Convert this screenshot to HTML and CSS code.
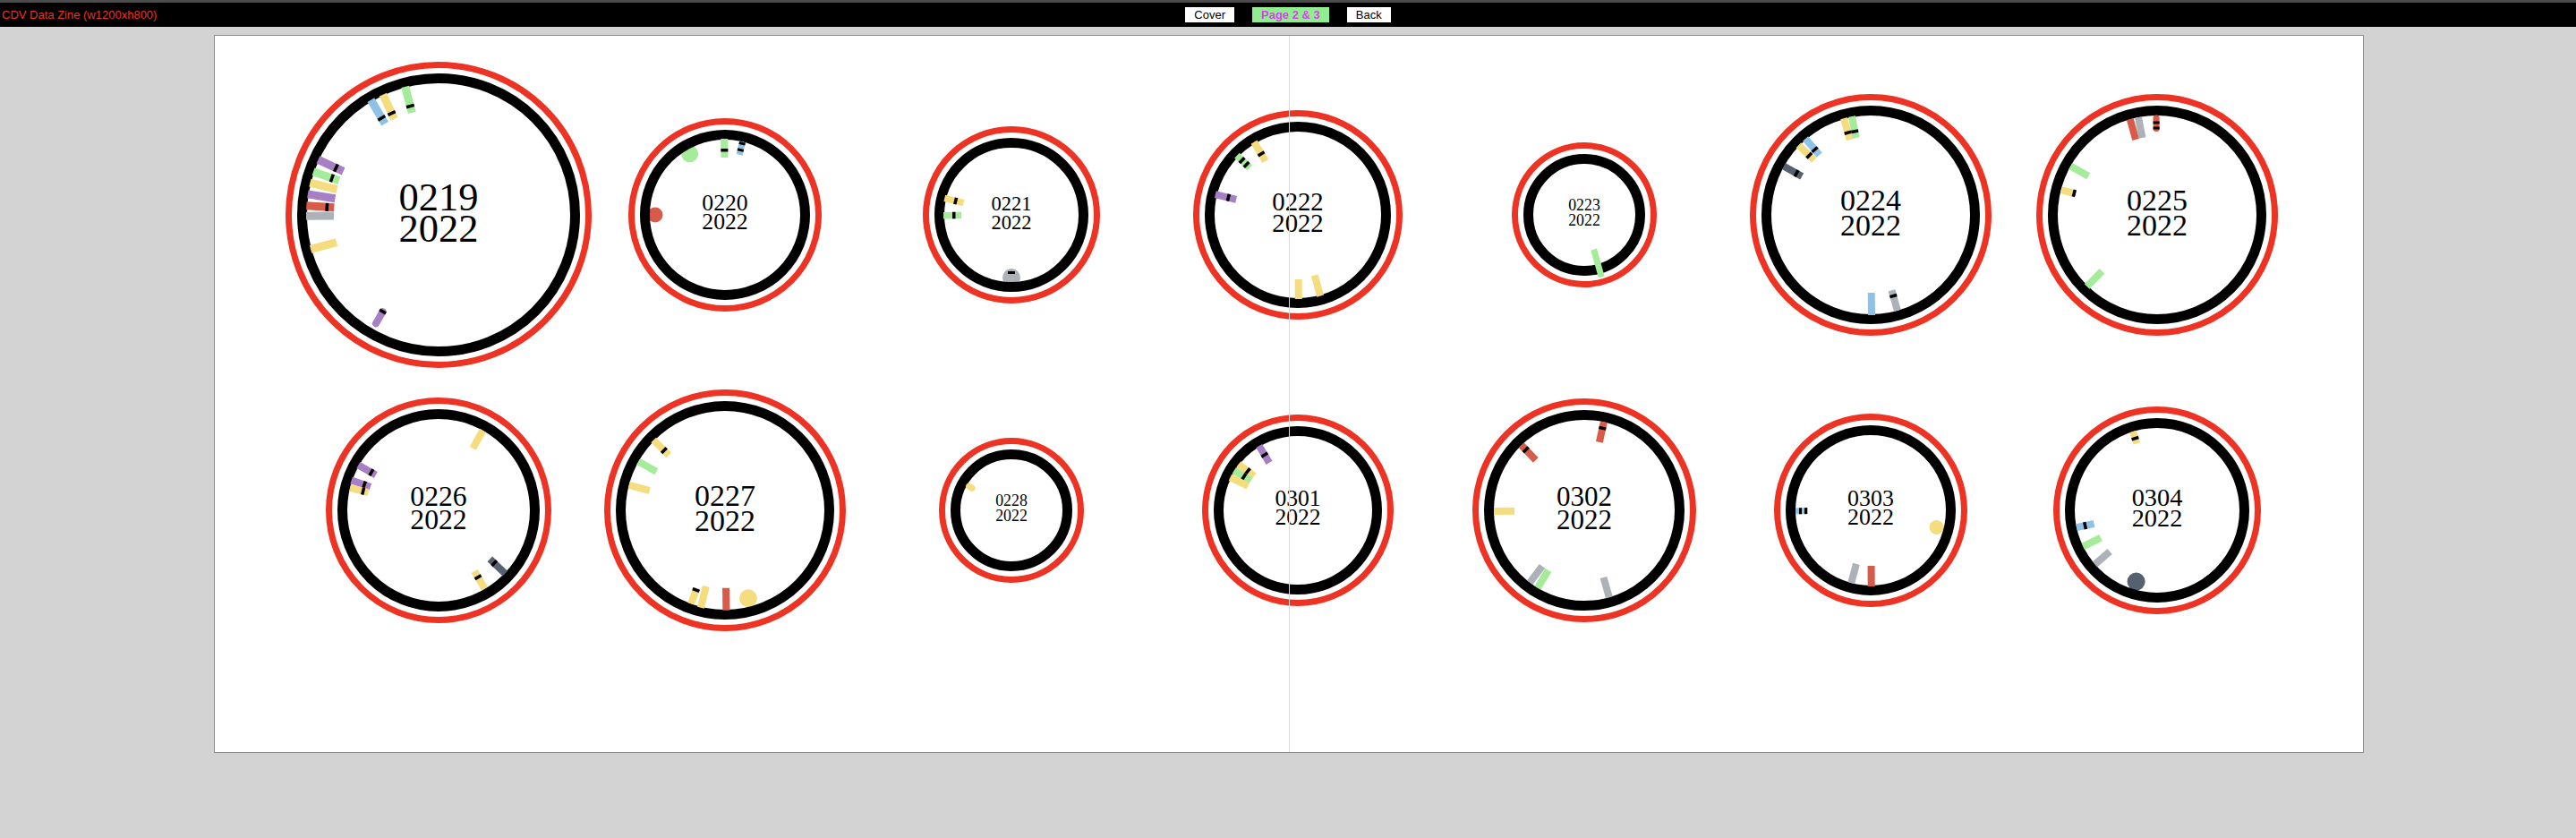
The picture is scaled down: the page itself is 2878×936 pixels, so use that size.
FILE: index.html
```html
<!DOCTYPE html>
<html lang="en">
<head>
<meta charset="utf-8">
<title>CDV Data Zine</title>
<link rel="stylesheet" href="styles.css">
</head>
<body>
<header class="topbar">
  <div class="title">CDV Data Zine (w1200xh800)</div>
  <nav class="nav">
    <button class="btn">Cover</button>
    <button class="btn btn-active">Page 2 &amp; 3</button>
    <button class="btn">Back</button>
  </nav>
  <div class="spacer"></div>
</header>
<main class="page">
  <div class="grid">
    <!-- 0219 -->
    <div class="cell">
      <svg class="viz" viewBox="-172 -172 344 344" width="344" height="344">
        <circle class="ring-red" r="167.5"/>
        <circle class="ring-black" r="152.5"/>
        <g transform="rotate(-30.5)"><rect class="bl" x="-4.5" y="-149" width="9" height="31"/><rect class="tk" x="-4.5" y="-127.25" width="9" height="3.5"/></g>
        <g transform="rotate(-24.8)"><rect class="ye" x="-4.5" y="-148" width="9" height="30"/><rect class="tk" x="-4.5" y="-126.75" width="9" height="3.5"/></g>
        <g transform="rotate(-14.6)"><rect class="gr" x="-4.5" y="-148" width="9" height="30"/><rect class="tk" x="-4.5" y="-127.25" width="9" height="3.5"/></g>
        <g transform="rotate(-65.4)"><rect class="pu" x="-4.5" y="-148" width="9" height="31"/><rect class="tk" x="-4.5" y="-127.75" width="9" height="3.5"/></g>
        <g transform="rotate(-71)"><rect class="gr" x="-4.5" y="-148" width="9" height="30.5"/><rect class="tk" x="-4.5" y="-127.75" width="9" height="3.5"/></g>
        <g transform="rotate(-76)"><rect class="ye" x="-4.5" y="-148" width="9" height="31"/></g>
        <g transform="rotate(-81)"><rect class="pu" x="-4.5" y="-148" width="9" height="31"/></g>
        <g transform="rotate(-86)"><rect class="re" x="-4.5" y="-148" width="9" height="31"/><rect class="tk" x="-4.5" y="-126.75" width="9" height="3.5"/></g>
        <g transform="rotate(-90.5)"><rect class="gy" x="-4.5" y="-148" width="9" height="31"/></g>
        <g transform="rotate(-105)"><rect class="ye" x="-4.5" y="-148" width="9" height="30"/></g>
        <g transform="rotate(-150)"><rect class="pu" x="-4" y="-144" width="8" height="23" rx="4"/><rect class="tk" x="-4" y="-126.5" width="8" height="3.5"/></g>
        <text class="lbl" font-size="44.5"><tspan x="0" y="-5">0219</tspan><tspan x="0" y="30">2022</tspan></text>
      </svg>
    </div>
    <!-- 0220 -->
    <div class="cell">
      <svg class="viz" viewBox="-172 -172 344 344" width="344" height="344">
        <circle class="ring-red" r="104.5"/>
        <circle class="gr" cx="-39.4" cy="-68.2" r="9.5"/>
        <circle class="re" cx="-78" cy="0" r="8.5"/>
        <circle class="ring-black" r="89.5"/>
        <g transform="rotate(-0.5)"><rect class="gr" x="-4" y="-85" width="8" height="21"/><rect class="tk" x="-4" y="-74" width="8" height="3.5"/></g>
        <g transform="rotate(13.5)"><rect class="bl" x="-3.5" y="-84" width="7" height="15"/><rect class="tk" x="-3.5" y="-83.5" width="7" height="3"/><rect class="tk" x="-3.5" y="-76" width="7" height="3"/></g>
        <text class="lbl" font-size="25.7"><tspan x="0" y="-5">0220</tspan><tspan x="0" y="16">2022</tspan></text>
      </svg>
    </div>
    <!-- 0221 -->
    <div class="cell">
      <svg class="viz" viewBox="-172 -172 344 344" width="344" height="344">
        <circle class="ring-red" r="95.5"/>
        <circle class="gy" cx="0" cy="70" r="10"/>
        <circle class="ring-black" r="80.5"/>
        <g transform="rotate(-76)"><rect class="ye" x="-3.75" y="-77" width="7.5" height="22"/><rect class="tk" x="-3.75" y="-66" width="7.5" height="3.5"/></g>
        <g transform="rotate(-90.5)"><rect class="gr" x="-3.75" y="-76" width="7.5" height="20"/><rect class="tk" x="-3.75" y="-66" width="7.5" height="3.5"/></g>
        <g transform="rotate(180)"><rect class="tk" x="-4" y="-66" width="8" height="3"/></g>
        <text class="lbl" font-size="22.5"><tspan x="0" y="-5">0221</tspan><tspan x="0" y="15.7">2022</tspan></text>
      </svg>
    </div>
    <!-- 0222 -->
    <div class="cell">
      <svg class="viz" viewBox="-172 -172 344 344" width="344" height="344">
        <circle class="ring-red" r="113.5"/>
        <circle class="ring-black" r="98.5"/>
        <g transform="rotate(-31)"><rect class="ye" x="-4" y="-95" width="8" height="25"/><rect class="tk" x="-4" y="-81.25" width="8" height="3.5"/></g>
        <g transform="rotate(-45.7)"><rect class="gr" x="-4" y="-95" width="8" height="20"/><rect class="tk" x="-4" y="-89" width="8" height="3.5"/><rect class="tk" x="-4" y="-82" width="8" height="3.5"/></g>
        <g transform="rotate(-76)"><rect class="pu" x="-4" y="-95" width="8" height="24"/><rect class="tk" x="-4" y="-81.75" width="8" height="3.5"/></g>
        <g transform="rotate(179.5)"><rect class="ye" x="-4" y="-94" width="8" height="22"/></g>
        <g transform="rotate(164.5)"><rect class="ye" x="-4" y="-94" width="8" height="24"/></g>
        <text class="lbl" font-size="28.7"><tspan x="0" y="-5">0222</tspan><tspan x="0" y="19.3">2022</tspan></text>
      </svg>
    </div>
    <!-- 0223 -->
    <div class="cell">
      <svg class="viz" viewBox="-172 -172 344 344" width="344" height="344">
        <circle class="ring-red" r="77.5"/>
        <circle class="ring-black" r="62.5"/>
        <g transform="rotate(164.5)"><rect class="gr" x="-3.5" y="-72" width="7" height="32"/></g>
        <text class="lbl" font-size="17.8"><tspan x="0" y="-5">0223</tspan><tspan x="0" y="12">2022</tspan></text>
      </svg>
    </div>
    <!-- 0224 -->
    <div class="cell">
      <svg class="viz" viewBox="-172 -172 344 344" width="344" height="344">
        <circle class="ring-red" r="131.5"/>
        <circle class="ring-black" r="116.5"/>
        <g transform="rotate(-15.5)"><rect class="ye" x="-4" y="-112" width="8" height="25"/><rect class="tk" x="-4" y="-97" width="8" height="3.5"/></g>
        <g transform="rotate(-10.8)"><rect class="gr" x="-4" y="-112" width="8" height="24.5"/><rect class="tk" x="-4" y="-96.75" width="8" height="3.5"/></g>
        <g transform="rotate(-40.6)"><rect class="bl" x="-4" y="-112" width="8" height="24"/><rect class="tk" x="-4" y="-97.75" width="8" height="3.5"/></g>
        <g transform="rotate(-46)"><rect class="ye" x="-4" y="-112" width="8" height="24"/><rect class="tk" x="-4" y="-97.25" width="8" height="3.5"/></g>
        <g transform="rotate(-60.8)"><rect class="sl" x="-4" y="-111" width="8" height="23"/><rect class="tk" x="-4" y="-96.75" width="8" height="3.5"/></g>
        <g transform="rotate(179.5)"><rect class="bl" x="-4" y="-112" width="8" height="25"/></g>
        <g transform="rotate(164.4)"><rect class="gy" x="-4" y="-111" width="8" height="23.5"/><rect class="tk" x="-4" y="-95.75" width="8" height="3.5"/></g>
        <text class="lbl" font-size="34"><tspan x="0" y="-5">0224</tspan><tspan x="0" y="23">2022</tspan></text>
      </svg>
    </div>
    <!-- 0225 -->
    <div class="cell">
      <svg class="viz" viewBox="-172 -172 344 344" width="344" height="344">
        <circle class="ring-red" r="131.5"/>
        <circle class="ring-black" r="116.5"/>
        <g transform="rotate(-15.8)"><rect class="re" x="-4" y="-111" width="8" height="23.5"/></g>
        <g transform="rotate(-10.9)"><rect class="gy" x="-4" y="-111" width="8" height="23.5"/></g>
        <g transform="rotate(-0.5)"><rect class="re" x="-3.5" y="-111.5" width="7" height="18.5" rx="3"/><rect class="tk" x="-3.5" y="-104.5" width="7" height="3"/><rect class="tk" x="-3.5" y="-98.5" width="7" height="3"/></g>
        <g transform="rotate(-60.6)"><rect class="gr" x="-4" y="-111" width="8" height="23"/></g>
        <g transform="rotate(-75.4)"><rect class="ye" x="-4" y="-111" width="8" height="17" rx="3"/><rect class="tk" x="-4" y="-97.5" width="8" height="3.5"/></g>
        <g transform="rotate(-135.6)"><rect class="gr" x="-4" y="-112" width="8" height="24"/></g>
        <text class="lbl" font-size="34"><tspan x="0" y="-5">0225</tspan><tspan x="0" y="23">2022</tspan></text>
      </svg>
    </div>
    <!-- 0226 -->
    <div class="cell">
      <svg class="viz" viewBox="-172 -172 344 344" width="344" height="344">
        <circle class="ring-red" r="122.5"/>
        <circle class="ring-black" r="107.5"/>
        <g transform="rotate(29)"><rect class="ye" x="-4" y="-102" width="8" height="23"/></g>
        <g transform="rotate(-60.6)"><rect class="pu" x="-4" y="-103" width="8" height="22.5"/><rect class="tk" x="-4" y="-88" width="8" height="3.5"/></g>
        <g transform="rotate(-71)"><rect class="pu" x="-4" y="-103" width="8" height="22.5"/><rect class="tk" x="-4" y="-89.5" width="8" height="3.5"/></g>
        <g transform="rotate(-75.8)"><rect class="ye" x="-4" y="-102" width="8" height="21"/><rect class="tk" x="-4" y="-88.75" width="8" height="3.5"/></g>
        <g transform="rotate(133.5)"><rect class="sl" x="-4" y="-102.5" width="8" height="23.5"/><rect class="tk" x="-4" y="-87.5" width="8" height="3.5"/></g>
        <g transform="rotate(149.5)"><rect class="ye" x="-4" y="-101.5" width="8" height="22.5"/><rect class="tk" x="-4" y="-88.5" width="8" height="3.5"/></g>
        <text class="lbl" font-size="31.7"><tspan x="0" y="-5">0226</tspan><tspan x="0" y="20.7">2022</tspan></text>
      </svg>
    </div>
    <!-- 0227 -->
    <div class="cell">
      <svg class="viz" viewBox="-172 -172 344 344" width="344" height="344">
        <circle class="ring-red" r="131.5"/>
        <circle class="ye" cx="26" cy="98.3" r="10"/>
        <circle class="ring-black" r="116.5"/>
        <g transform="rotate(-45.5)"><rect class="ye" x="-4" y="-112" width="8" height="24"/><rect class="tk" x="-4" y="-97.25" width="8" height="3.5"/></g>
        <g transform="rotate(-60.6)"><rect class="gr" x="-4" y="-111" width="8" height="23"/></g>
        <g transform="rotate(-75.3)"><rect class="ye" x="-4" y="-111" width="8" height="24"/></g>
        <g transform="rotate(-160)"><rect class="ye" x="-4" y="-111" width="8" height="18.5"/><rect class="tk" x="-4" y="-96.5" width="8" height="3.5"/></g>
        <g transform="rotate(-166)"><rect class="ye" x="-4" y="-112" width="8" height="24.5"/></g>
        <g transform="rotate(179.3)"><rect class="re" x="-4" y="-111.7" width="8" height="25"/></g>
        <text class="lbl" font-size="34"><tspan x="0" y="-5">0227</tspan><tspan x="0" y="23">2022</tspan></text>
      </svg>
    </div>
    <!-- 0228 -->
    <div class="cell">
      <svg class="viz" viewBox="-172 -172 344 344" width="344" height="344">
        <circle class="ring-red" r="77.5"/>
        <circle class="ring-black" r="62.5"/>
        <g transform="rotate(-60.6)"><rect class="ye" x="-3.5" y="-58" width="7" height="11" rx="3.5"/></g>
        <text class="lbl" font-size="17.8"><tspan x="0" y="-5">0228</tspan><tspan x="0" y="12">2022</tspan></text>
      </svg>
    </div>
    <!-- 0301 -->
    <div class="cell">
      <svg class="viz" viewBox="-172 -172 344 344" width="344" height="344">
        <circle class="ring-red" r="103.5"/>
        <circle class="ring-black" r="88.5"/>
        <g transform="rotate(-31)"><rect class="pu" x="-4" y="-84" width="8" height="22"/><rect class="tk" x="-4" y="-74" width="8" height="3.5"/></g>
        <g transform="rotate(-52)"><rect class="ye" x="-4" y="-84" width="8" height="22"/><rect class="tk" x="-4" y="-72.75" width="8" height="3.5"/></g>
        <g transform="rotate(-58)"><rect class="gr" x="-4" y="-84" width="8" height="22"/><rect class="tk" x="-4" y="-72.75" width="8" height="3.5"/></g>
        <g transform="rotate(-64)"><rect class="ye" x="-4" y="-84" width="8" height="22"/></g>
        <text class="lbl" font-size="25.6"><tspan x="0" y="-5">0301</tspan><tspan x="0" y="16">2022</tspan></text>
      </svg>
    </div>
    <!-- 0302 -->
    <div class="cell">
      <svg class="viz" viewBox="-172 -172 344 344" width="344" height="344">
        <circle class="ring-red" r="121.5"/>
        <circle class="ring-black" r="106.5"/>
        <g transform="rotate(12.5)"><rect class="re" x="-4" y="-101" width="8" height="23"/><rect class="tk" x="-4" y="-95.75" width="8" height="3.5"/></g>
        <g transform="rotate(-44)"><rect class="re" x="-4" y="-101" width="8" height="23"/><rect class="tk" x="-4" y="-95.75" width="8" height="3.5"/></g>
        <g transform="rotate(-90.5)"><rect class="ye" x="-4" y="-101" width="8" height="23"/></g>
        <g transform="rotate(-143)"><rect class="gy" x="-4" y="-101" width="8" height="23"/></g>
        <g transform="rotate(-149)"><rect class="gr" x="-4" y="-101" width="8" height="23"/></g>
        <g transform="rotate(164)"><rect class="gy" x="-4" y="-101" width="8" height="23"/></g>
        <text class="lbl" font-size="31"><tspan x="0" y="-5">0302</tspan><tspan x="0" y="20.5">2022</tspan></text>
      </svg>
    </div>
    <!-- 0303 -->
    <div class="cell">
      <svg class="viz" viewBox="-172 -172 344 344" width="344" height="344">
        <circle class="ring-red" r="104.5"/>
        <circle class="ye" cx="73.6" cy="18.9" r="8"/>
        <circle class="ring-black" r="89.5"/>
        <g transform="rotate(-90.5)"><rect class="bl" x="-3.5" y="-84" width="7" height="14"/><rect class="tk" x="-3.5" y="-80" width="7" height="3"/><rect class="tk" x="-3.5" y="-74" width="7" height="3"/></g>
        <g transform="rotate(-165)"><rect class="gy" x="-4" y="-84" width="8" height="22"/></g>
        <g transform="rotate(179.5)"><rect class="re" x="-4" y="-85" width="8" height="23"/></g>
        <text class="lbl" font-size="25.9"><tspan x="0" y="-5">0303</tspan><tspan x="0" y="16">2022</tspan></text>
      </svg>
    </div>
    <!-- 0304 -->
    <div class="cell">
      <svg class="viz" viewBox="-172 -172 344 344" width="344" height="344">
        <circle class="ring-red" r="112.5"/>
        <circle class="sl" cx="-23.4" cy="79.6" r="10"/>
        <circle class="ring-black" r="97.5"/>
        <g transform="rotate(-17)"><rect class="ye" x="-4" y="-92" width="8" height="14"/><rect class="tk" x="-4" y="-85.75" width="8" height="3.5"/></g>
        <g transform="rotate(-102)"><rect class="bl" x="-4" y="-92" width="8" height="20"/><rect class="tk" x="-4" y="-84" width="8" height="3.5"/></g>
        <g transform="rotate(-116)"><rect class="gr" x="-4" y="-92" width="8" height="22"/></g>
        <g transform="rotate(-131)"><rect class="gy" x="-4" y="-92" width="8" height="22"/></g>
        <text class="lbl" font-size="28.3"><tspan x="0" y="-5">0304</tspan><tspan x="0" y="18">2022</tspan></text>
      </svg>
    </div>
  </div>
</main>
</body>
</html>
```
FILE: styles.css
```css
html, body {
  margin: 0;
  padding: 0;
}

body {
  background: #d3d3d3;
  min-height: 936px;
}

.topbar {
  display: grid;
  grid-template-columns: 1fr auto 1fr;
  align-items: center;
  height: 27px;
  border-top: 3px solid #4b4b4b;
  background: #000;
}

.title {
  color: #ec3324;
  font: 13px/27px "Liberation Sans", Arial, sans-serif;
  padding-left: 2px;
  white-space: nowrap;
}

.nav {
  display: flex;
  gap: 20px;
  align-items: center;
}

.btn {
  font: 13px/17px "Liberation Sans", Arial, sans-serif;
  height: 17px;
  padding: 0 10px;
  margin: 0;
  border: 0;
  border-radius: 0;
  background: #fff;
  color: #000;
}

.btn-active {
  background: #90ee90;
  color: #dd3fec;
  font-weight: bold;
}

.page {
  position: relative;
  width: 2400px;
  height: 800px;
  margin: 9px 0 0 239px;
  background: #fff;
  border: 1px solid #8c8c8c;
}

.page::after {
  content: "";
  position: absolute;
  left: 1200px;
  top: 0;
  bottom: 0;
  width: 1px;
  background: #dadada;
}

.grid {
  display: grid;
  grid-template-columns: repeat(7, 320px);
  grid-auto-rows: 330px;
  padding: 35px 0 0 90px;
}

.cell {
  display: flex;
  align-items: center;
  justify-content: center;
  min-width: 0;
  min-height: 0;
}

.viz {
  display: block;
  flex: none;
  overflow: visible;
}

.ring-red {
  fill: none;
  stroke: #ec3324;
  stroke-width: 7;
}

.ring-black {
  fill: none;
  stroke: #000;
  stroke-width: 11;
}

.lbl {
  font-family: "Liberation Serif", "Times New Roman", serif;
  text-anchor: middle;
  fill: #000;
}

.pu { fill: #a77fc4; }
.gr { fill: #a5ec9a; }
.ye { fill: #f5dc7e; }
.bl { fill: #90c2e7; }
.re { fill: #d85a48; }
.gy { fill: #adb1b8; }
.sl { fill: #55616e; }
.tk { fill: #000; }
```
